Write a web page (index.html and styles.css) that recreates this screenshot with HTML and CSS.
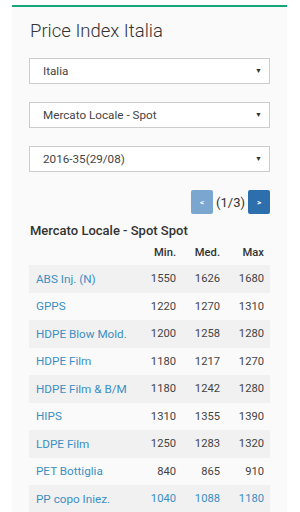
FILE: index.html
```html
<!DOCTYPE html>
<html lang="it">
<head>
  <meta charset="UTF-8" />
  <title>Price Index Italia</title>
  <link rel="stylesheet" href="styles.css">
</head>
<body>
  <div class="panel">
    <h1 class="title">Price Index Italia</h1>

    <div class="select"><span>Italia</span><span class="caret">&#9660;</span></div>
    <div class="select"><span>Mercato Locale - Spot</span><span class="caret">&#9660;</span></div>
    <div class="select"><span>2016-35(29/08)</span><span class="caret">&#9660;</span></div>

    <div class="pager">
      <a class="pager-btn prev" href="#">&lt;</a>
      <span class="pager-count">(1/3)</span>
      <a class="pager-btn next" href="#">&gt;</a>
    </div>

    <h2 class="table-title">Mercato Locale - Spot Spot</h2>
    <table class="prices">
      <colgroup>
        <col class="col-name"><col class="col-num"><col class="col-num"><col class="col-num">
      </colgroup>
      <thead>
        <tr><th></th><th>Min.</th><th>Med.</th><th>Max</th></tr>
      </thead>
      <tbody>
        <tr><td><a href="#">ABS Inj. (N)</a></td><td>1550</td><td>1626</td><td>1680</td></tr>
        <tr><td><a href="#">GPPS</a></td><td>1220</td><td>1270</td><td>1310</td></tr>
        <tr><td><a href="#">HDPE Blow Mold.</a></td><td>1200</td><td>1258</td><td>1280</td></tr>
        <tr><td><a href="#">HDPE Film</a></td><td>1180</td><td>1217</td><td>1270</td></tr>
        <tr><td><a href="#">HDPE Film &amp; B/M</a></td><td>1180</td><td>1242</td><td>1280</td></tr>
        <tr><td><a href="#">HIPS</a></td><td>1310</td><td>1355</td><td>1390</td></tr>
        <tr><td><a href="#">LDPE Film</a></td><td>1250</td><td>1283</td><td>1320</td></tr>
        <tr><td><a href="#">PET Bottiglia</a></td><td>840</td><td>865</td><td>910</td></tr>
        <tr class="highlight"><td><a href="#">PP copo Iniez.</a></td><td>1040</td><td>1088</td><td>1180</td></tr>
      </tbody>
    </table>
  </div>
</body>
</html>
```

FILE: styles.css
```css
body {
  margin: 0;
  background: #fff;
  font-family: Roboto, 'Liberation Sans', sans-serif;
  color: #333;
}
.panel {
  margin: 5px 13px 0 12px;
  background: #fafafa;
  border-top: 2px solid #17a57c;
  padding: 10px 17px 20px 17px;
  min-height: 600px;
}
.title {
  margin: 0 0 13px 1px;
  font-size: 18.5px;
  font-weight: 300;
  color: #333;
  line-height: 28px;
}
/* Selects */
.select {
  display: flex;
  align-items: center;
  justify-content: space-between;
  height: 24px;
  background: #fff;
  border: 1px solid #ccc;
  padding: 0 7px 0 13px;
  font-size: 11.7px;
  color: #444;
  margin-bottom: 18px;
}
.select .caret {
  font-size: 7px;
  color: #333;
}
/* Pager */
.pager {
  display: flex;
  justify-content: flex-end;
  align-items: center;
  gap: 3px;
}
.pager-btn {
  width: 22px;
  height: 24px;
  border-radius: 2px;
  display: flex;
  align-items: center;
  justify-content: center;
  color: #fff;
  font-size: 8px;
  font-weight: 700;
  text-decoration: none;
}
.prev { background: #7aa6cf; }
.next { background: #2c6fac; }
.pager-count {
  font-size: 13px;
  color: #333;
}
.table-title {
  font-size: 13px;
  font-weight: 500;
  margin: 8px 0 0 1px;
  line-height: 18px;
  color: #333;
}
/* Table */
.prices {
  width: 100%;
  table-layout: fixed;
  border-collapse: collapse;
  font-size: 11.2px;
}
.col-num {
  width: 44px;
}
.prices th {
  font-weight: 500;
  text-align: right;
  height: 25px;
  padding: 0 6px 0 0;
  color: #333;
}
.prices td {
  height: 27.5px;
  padding: 0 6px 0 0;
  text-align: right;
  color: #444;
  white-space: nowrap;
}
.prices td:first-child {
  text-align: left;
  padding-left: 7px;
  font-size: 11.7px;
}
.prices tbody tr:nth-child(odd) {
  background: #f1f1f1;
}
.prices a {
  color: #3b8fc2;
  text-decoration: none;
}
.prices tr.highlight td {
  color: #3b8fc2;
}
```
